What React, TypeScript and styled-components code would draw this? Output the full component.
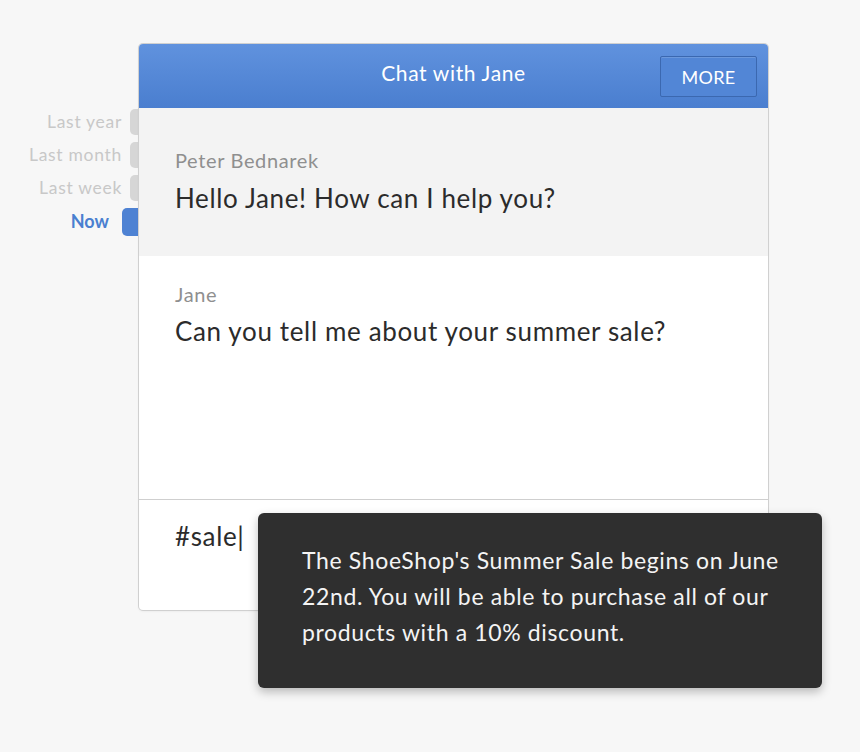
import React from 'react';
import styled, { createGlobalStyle } from 'styled-components';

const GlobalStyle = createGlobalStyle`
  html, body {
    margin: 0;
    padding: 0;
    background: #f7f7f7;
    font-family: Lato, "Open Sans", sans-serif;
  }
`;

const Page = styled.div`
  position: relative;
  width: 860px;
  height: 752px;
  display: flex;
  padding-top: 44px;
  box-sizing: border-box;
  letter-spacing: 0.04em;
`;

const Timeline = styled.div`
  width: 139px;
  padding-top: 65px;
  display: flex;
  flex-direction: column;
  align-items: flex-end;
  gap: 7px;
`;

const TimeRow = styled.div<{ active?: boolean }>`
  display: flex;
  align-items: center;
  justify-content: flex-end;
  gap: ${p => (p.active ? 13 : 8)}px;
  height: ${p => (p.active ? 28 : 26)}px;
`;

const TimeLabel = styled.span<{ active?: boolean }>`
  font-size: ${p => (p.active ? 18 : 17.5)}px;
  font-weight: ${p => (p.active ? 700 : 400)};
  letter-spacing: ${p => (p.active ? 0 : 0.04)}em;
  color: ${p => (p.active ? '#4a7fd0' : '#c8c8c8')};
  margin-top: ${p => (p.active ? -3 : -1)}px;
`;

const TimeTab = styled.div<{ active?: boolean }>`
  width: ${p => (p.active ? 17 : 9)}px;
  height: 100%;
  border-radius: 5px 0 0 5px;
  background: ${p => (p.active ? '#4e82d3' : '#d6d6d6')};
`;

const ChatWindow = styled.div`
  width: 629px;
  height: 566px;
  display: flex;
  flex-direction: column;
  border-radius: 4px;
  overflow: hidden;
  background: #fff;
  box-shadow: 0 0 0 1px #d0d0d0, 0 1px 3px rgba(0, 0, 0, 0.08);
`;

const Header = styled.div`
  height: 64px;
  flex: none;
  box-sizing: border-box;
  padding-bottom: 7px;
  display: flex;
  align-items: center;
  justify-content: center;
  position: relative;
  background: linear-gradient(to bottom, #6092de, #4a7ecf);
`;

const Title = styled.div`
  color: #fff;
  font-size: 21px;
`;

const MoreButton = styled.button`
  position: absolute;
  right: 11px;
  top: 12px;
  width: 97px;
  height: 41px;
  border: 1px solid #3b68b0;
  border-radius: 2px;
  background: #5286d6;
  color: #fff;
  font-family: Lato, sans-serif;
  font-size: 18px;
  letter-spacing: 0.3px;
  box-shadow: inset 0 1px 0 rgba(255, 255, 255, 0.15);
`;

const Message = styled.div<{ shaded?: boolean; h: number; top: number }>`
  height: ${p => p.h}px;
  flex: none;
  box-sizing: border-box;
  padding: ${p => p.top}px 36px 0;
  background: ${p => (p.shaded ? '#f3f3f3' : '#fff')};
`;

const Author = styled.div`
  font-size: 20px;
  line-height: 24px;
  color: #8f8f8f;
`;

const Text = styled.div<{ gap: number }>`
  margin-top: ${p => p.gap}px;
  font-size: 26px;
  line-height: 32px;
  color: #2b2b2b;
`;

const InputArea = styled.div`
  flex: 1;
  border-top: 1px solid #cfcfcf;
  padding: 20px 36px 0;
  font-size: 26px;
  line-height: 32px;
  color: #2b2b2b;
`;

const Tooltip = styled.div`
  position: absolute;
  left: 258px;
  top: 513px;
  width: 564px;
  height: 175px;
  box-sizing: border-box;
  padding: 29px 30px 0 44px;
  background: #2f2f2f;
  border-radius: 6px;
  box-shadow: 0 4px 10px rgba(0, 0, 0, 0.25);
  color: #f4f4f4;
  font-size: 23px;
  line-height: 36px;
`;

const times = ['Last year', 'Last month', 'Last week', 'Now'];

export default function App() {
  return (
    <>
      <GlobalStyle />
      <Page>
        <Timeline>
          {times.map((t, i) => {
            const active = i === times.length - 1;
            return (
              <TimeRow key={t} active={active}>
                <TimeLabel active={active}>{t}</TimeLabel>
                <TimeTab active={active} />
              </TimeRow>
            );
          })}
        </Timeline>
        <ChatWindow>
          <Header>
            <Title>Chat with Jane</Title>
            <MoreButton>MORE</MoreButton>
          </Header>
          <Message shaded h={148} top={40}>
            <Author>Peter Bednarek</Author>
            <Text gap={10}>Hello Jane! How can I help you?</Text>
          </Message>
          <Message h={243} top={26}>
            <Author>Jane</Author>
            <Text gap={9}>Can you tell me about your summer sale?</Text>
          </Message>
          <InputArea>#sale|</InputArea>
        </ChatWindow>
        <Tooltip>
          The ShoeShop's Summer Sale begins on June 22nd. You will be able to purchase all of our products with a 10% discount.
        </Tooltip>
      </Page>
    </>
  );
}
